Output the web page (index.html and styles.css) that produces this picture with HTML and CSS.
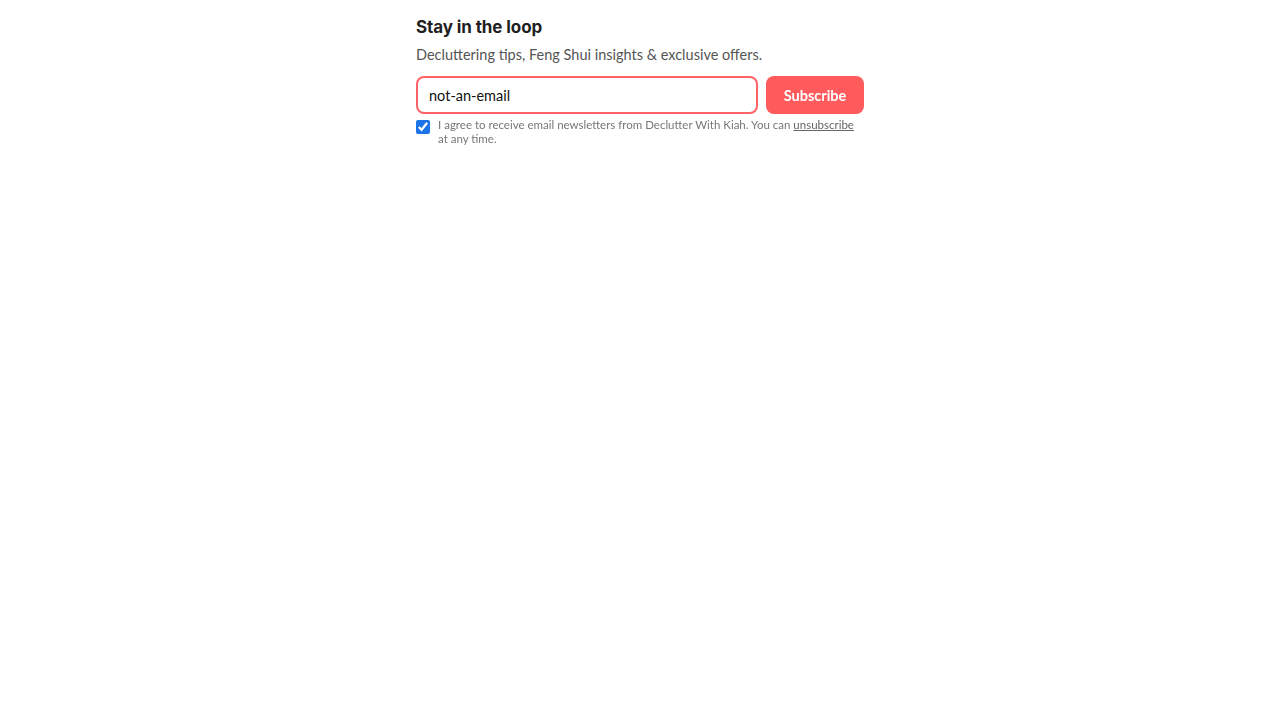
FILE: index.html
```html
<!DOCTYPE html>
<html lang="en">
<head>
<meta charset="utf-8">
<title>Stay in the loop</title>
<link rel="stylesheet" href="styles.css">
</head>
<body>
<section class="newsletter">
  <h2 class="title">Stay in the loop</h2>
  <p class="subtitle">Decluttering tips, Feng Shui insights &amp; exclusive offers.</p>
  <form class="form">
    <div class="row">
      <input class="email" type="text" value="not-an-email" autofocus>
      <button class="btn" type="button">Subscribe</button>
    </div>
    <label class="consent">
      <input class="check" type="checkbox" checked>
      <span class="consent-text">I agree to receive email newsletters from Declutter With Kiah. You can <a class="link" href="#">unsubscribe</a> at any time.</span>
    </label>
  </form>
</section>
</body>
</html>
```

FILE: styles.css
```css
html, body {
  margin: 0;
  padding: 0;
  background: #ffffff;
}
body {
  font-family: "Lato", "Open Sans", sans-serif;
  color: #222;
}
.newsletter {
  width: 448px;
  margin: 0 auto;
  padding-top: 16px;
}
.title {
  margin: 0;
  font-family: "Inter", "Open Sans", sans-serif;
  font-weight: 700;
  font-size: 17px;
  line-height: 22px;
  color: #1f1f1f;
  letter-spacing: -0.1px;
}
.subtitle {
  margin: 7px 0 0;
  font-size: 14.5px;
  line-height: 20px;
  color: #555;
}
.form {
  margin-top: 11px;
}
.row {
  display: flex;
  gap: 8px;
}
.email {
  flex: 1;
  min-width: 0;
  box-sizing: border-box;
  height: 38px;
  border: 2px solid #ff6365;
  border-radius: 8px;
  padding: 0 11px;
  font-family: "Lato", "Open Sans", sans-serif;
  font-size: 14.5px;
  color: #111;
  outline: none;
  background: #fff;
  caret-color: #111;
}
.btn {
  width: 98px;
  height: 38px;
  border: none;
  border-radius: 8px;
  background: #ff5a5c;
  color: #fff;
  font-family: "Lato", "Open Sans", sans-serif;
  font-weight: 700;
  font-size: 14.5px;
  padding: 0;
}
.consent {
  display: flex;
  align-items: flex-start;
  gap: 8px;
  margin-top: 4px;
}
.check {
  margin: 2px 0 0;
  width: 14px;
  height: 14px;
  accent-color: #1a73e8;
  flex: none;
}
.consent-text {
  font-size: 11.5px;
  line-height: 14px;
  color: #777;
}
.link {
  color: #666;
  text-decoration: underline;
}
```
